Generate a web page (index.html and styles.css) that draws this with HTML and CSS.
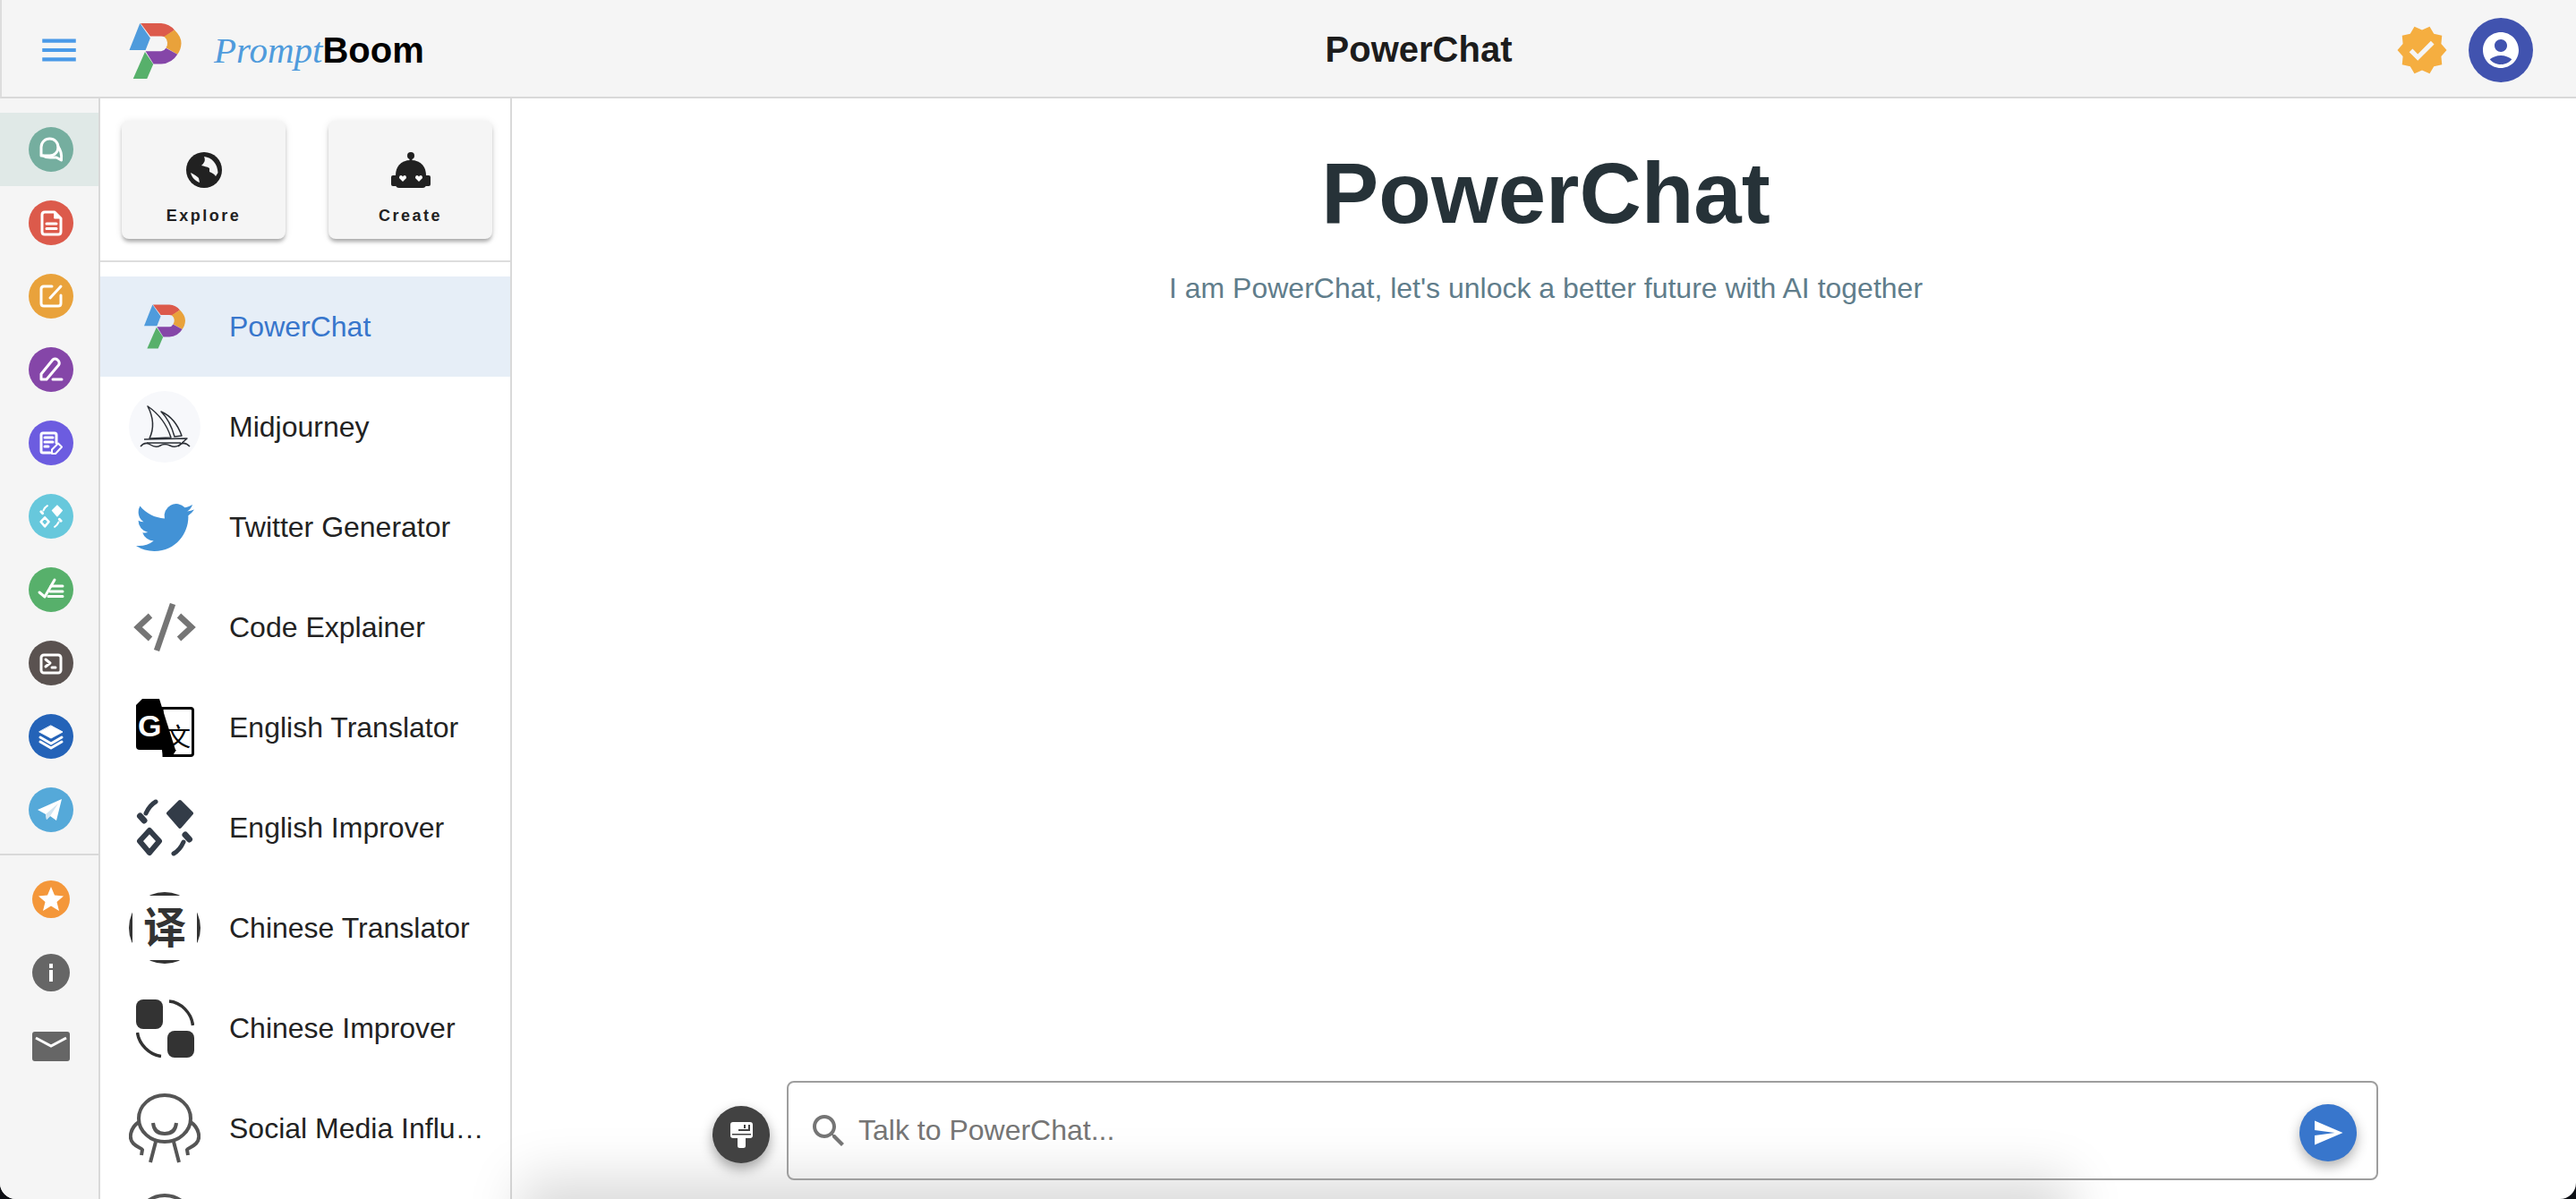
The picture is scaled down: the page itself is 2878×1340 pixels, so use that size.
FILE: index.html
```html
<!DOCTYPE html>
<html lang="en">

<head>
    <meta charset="UTF-8">
    <title>PowerChat - PromptBoom</title>
    <link rel="stylesheet" href="styles.css">
</head>

<body>
    <!-- shared icons -->
    <svg class="defs">
        <symbol id="logo" viewBox="0 0 176 188">
            <path fill="#4f9bdc" d="M36 0 71 50 55 91H0z" />
            <path fill="#dc5a4b" d="M38 0H108Q136 2 153 23L120 46Q114 44 108 44H71z" />
            <path fill="#e9a23b" d="M153 23Q176 45 176 68Q175 90 163 105L124 83Q130 75 129 65Q127 53 118 45z" />
            <path fill="#8546a8" d="M55 95H108Q118 94 124 84L163 105Q145 135 108 138H82z" />
            <path fill="#57b06b" d="M53 97 81 139 60 188H13z" />
        </symbol>
        <symbol id="diamonds" viewBox="0 0 64 64">
            <path fill="currentColor" stroke="currentColor" stroke-width="4" stroke-linejoin="round" d="M49 3 62 16 49 31 36 16z" />
            <path fill="none" stroke="currentColor" stroke-width="6" stroke-linejoin="round" d="M15 35 26 47 15 60 4 47z" />
            <path fill="none" stroke="currentColor" stroke-width="5" stroke-linecap="round" d="M22 3Q15 7 11 16" />
            <path fill="none" stroke="currentColor" stroke-width="7" stroke-linecap="round" d="M4.500 19 9 24" />
            <path fill="none" stroke="currentColor" stroke-width="5" stroke-linecap="round" d="M42 61Q49 57 53 48" />
            <path fill="none" stroke="currentColor" stroke-width="7" stroke-linecap="round" d="M59.500 45 55 40" />
        </symbol>
    </svg>

    <div class="app">
        <header class="topbar">
            <div class="topbar-left">
                <svg class="menu-icon" viewBox="0 0 24 24">
                    <path d="M3 18h18v-2H3v2zm0-5h18v-2H3v2zm0-7v2h18V6H3z" />
                </svg>
                <svg class="brand-logo"><use href="#logo" /></svg>
                <div class="brand-name"><span class="brand-prompt">Prompt</span><span class="brand-boom">Boom</span></div>
            </div>
            <div class="topbar-title">PowerChat</div>
            <div class="topbar-right">
                <svg class="verified-icon" viewBox="0 0 24 24">
                    <path d="M23 12l-2.44-2.79.34-3.69-3.61-.82-1.89-3.2L12 2.96 8.6 1.5 6.71 4.69 3.1 5.5l.34 3.7L1 12l2.44 2.79-.34 3.7 3.61.82L8.6 22.5l3.4-1.47 3.4 1.46 1.89-3.19 3.61-.82-.34-3.69L23 12zm-12.91 4.72-3.8-3.81 1.48-1.48 2.32 2.33 5.85-5.87 1.48 1.48-7.33 7.35z" />
                </svg>
                <div class="avatar">
                    <svg viewBox="0 0 24 24">
                        <path d="M12 2C6.48 2 2 6.48 2 12s4.48 10 10 10 10-4.48 10-10S17.52 2 12 2zm0 4c1.93 0 3.5 1.57 3.5 3.5S13.93 13 12 13s-3.5-1.57-3.5-3.5S10.07 6 12 6zm0 14c-2.03 0-4.43-.82-6.14-2.88C7.55 15.8 9.68 15 12 15s4.45.8 6.14 2.12C16.43 19.18 14.03 20 12 20z" />
                    </svg>
                </div>
            </div>
        </header>

        <div class="workspace">
            <nav class="rail">
                <div class="rail-row active">
                    <span class="rail-dot dot-teal">
                        <svg class="glyph" viewBox="0 0 50 50">
                            <path d="M14 32V22.500a9.500 9.500 0 1 1 9.500 9.500z" />
                            <path d="M33 22q4.500 6 3.500 15L31 34H24Q19 34 16 32" />
                        </svg>
                    </span>
                </div>
                <div class="rail-row">
                    <span class="rail-dot dot-red">
                        <svg class="glyph" viewBox="0 0 50 50">
                            <path d="M18 13H29L36 20V35Q36 38 33 38H18Q15 38 15 35V16Q15 13 18 13z" />
                            <path d="M20 26H31M20 31.500H31" />
                            <path class="solid" d="M29 13 36 20H29z" />
                        </svg>
                    </span>
                </div>
                <div class="rail-row">
                    <span class="rail-dot dot-orange">
                        <svg class="glyph" viewBox="0 0 50 50">
                            <path d="M26 14H17Q14 14 14 17V33Q14 36 17 36H33Q36 36 36 33V24" />
                            <path d="M24 27 36 14" />
                        </svg>
                    </span>
                </div>
                <div class="rail-row">
                    <span class="rail-dot dot-purple">
                        <svg class="glyph" viewBox="0 0 50 50">
                            <path d="M14 36V30L27 14Q29.500 12 32 14L33.500 15.500Q35 18 33.500 20L20 36z" />
                            <path d="M27 36H37" />
                        </svg>
                    </span>
                </div>
                <div class="rail-row">
                    <span class="rail-dot dot-violet">
                        <svg class="glyph" viewBox="0 0 50 50">
                            <path d="M31 25V16Q31 14 29 14H16Q14 14 14 16V34Q14 36 16 36H24" />
                            <path d="M18 19H27M18 24H27M18 29H22" />
                            <path class="thin" d="M26 37V32.500L33 25.500L37 29.500L30 37z" />
                        </svg>
                    </span>
                </div>
                <div class="rail-row">
                    <span class="rail-dot dot-sky">
                        <svg class="glyph-symbol"><use href="#diamonds" /></svg>
                    </span>
                </div>
                <div class="rail-row">
                    <span class="rail-dot dot-green">
                        <svg class="glyph" viewBox="0 0 50 50">
                            <path d="M12 28 18 33 29 14" />
                            <path d="M25 21H38M24 27H38M22 32.500H38" />
                        </svg>
                    </span>
                </div>
                <div class="rail-row">
                    <span class="rail-dot dot-brown">
                        <svg class="glyph" viewBox="0 0 50 50">
                            <rect x="14" y="16" width="22" height="20" rx="3" />
                            <path d="M19 21 24 25 19 29M26 30H30" />
                        </svg>
                    </span>
                </div>
                <div class="rail-row">
                    <span class="rail-dot dot-blue">
                        <svg class="glyph" viewBox="0 0 50 50">
                            <path class="solid" d="M25 13 38 20 25 27 12 20z" />
                            <path d="M13 26 25 33 37 26M13 31 25 38 37 31" />
                        </svg>
                    </span>
                </div>
                <div class="rail-row">
                    <span class="rail-dot dot-telegram">
                        <svg viewBox="0 0 50 50">
                            <path fill="#fff" d="M10 25 37 13 31 37 24 32 20 36 19 30z" />
                            <path fill="#d2e5f1" d="M19 30 33 18 24 32 20 36z" />
                        </svg>
                    </span>
                </div>
                <div class="rail-divider"></div>
                <div class="rail-row">
                    <span class="rail-small dot-star">
                        <svg viewBox="0 0 42 42">
                            <path fill="#fff" d="M21 7 25 16.500 35 17.500 27.500 24 30 34 21 28.500 12 34 14.500 24 7 17.500 17 16.500z" />
                        </svg>
                    </span>
                </div>
                <div class="rail-row">
                    <span class="rail-small dot-info">
                        <svg viewBox="0 0 42 42">
                            <path fill="#fff" d="M19 11H23V16H19zM19 18H23V31H19z" />
                        </svg>
                    </span>
                </div>
                <div class="rail-row">
                    <svg class="mail-icon" viewBox="0 0 42 33">
                        <rect width="42" height="33" rx="3" fill="#666" />
                        <path fill="none" stroke="#fff" stroke-width="3" d="M4 7 21 16 38 7" />
                    </svg>
                </div>
            </nav>

            <aside class="sidebar">
                <div class="quick-actions">
                    <button class="quick-btn">
                        <svg class="quick-icon" viewBox="0 0 40 40">
                            <circle cx="20" cy="20" r="20" fill="#212121" />
                            <path fill="#f5f5f5" d="M20 5C29 6 35 13 35.500 23L33 27C31 24 28 23 26 22L26 18C23 16 20 16 17 15C20 12 22 10 20 5z" />
                            <path fill="#f5f5f5" d="M5 23C9 25 12 27 14 29L15 34C10 32 6 28 5 23z" />
                        </svg>
                        Explore
                    </button>
                    <button class="quick-btn">
                        <svg class="quick-icon robot" viewBox="0 0 44 40">
                            <circle cx="22" cy="4" r="4" fill="#212121" />
                            <path fill="#212121" d="M20.500 4H23.500V10H20.500z" />
                            <path fill="#212121" d="M22 9C10 9 5 17 5 26V36Q5 40 9 40H35Q39 40 39 36V26C39 17 34 9 22 9z" />
                            <rect y="26" width="7" height="12" rx="2" fill="#212121" />
                            <rect x="37" y="26" width="7" height="12" rx="2" fill="#212121" />
                            <path fill="#fff" d="M13 33 9 29Q9 26 11 26 12.500 26 13 27.500 13.500 26 15 26 17 26 17 29z" />
                            <path fill="#fff" d="M31 33 27 29Q27 26 29 26 30.500 26 31 27.500 31.500 26 33 26 35 26 35 29z" />
                        </svg>
                        Create
                    </button>
                </div>

                <ul class="bot-list">
                    <li class="bot-row selected">
                        <span class="bot-icon"><svg class="bot-logo"><use href="#logo" /></svg></span>
                        <span class="bot-name">PowerChat</span>
                    </li>
                    <li class="bot-row">
                        <span class="bot-icon">
                            <svg viewBox="0 0 80 80" class="boat">
                                <circle cx="40" cy="40" r="40" fill="#f7f8fb" />
                                <g fill="none" stroke="#2b2f36" stroke-width="1.500" stroke-linejoin="round">
                                    <path d="M21 17Q40 30 47 52L23 53Q31 36 21 17z" />
                                    <path d="M36 23Q52 30 59 50L51 51Q46 33 36 23z" />
                                    <path d="M17 54 65 53 55 62M20 58H58" />
                                    <path d="M13 62Q18 56 24 60T35 61 46 61 57 60 68 62" />
                                </g>
                            </svg>
                        </span>
                        <span class="bot-name">Midjourney</span>
                    </li>
                    <li class="bot-row">
                        <span class="bot-icon">
                            <svg viewBox="0 0 24 24" class="twitter">
                                <path d="M23.953 4.570a10 10 0 01-2.825.775 4.958 4.958 0 002.163-2.723c-.951.555-2.005.959-3.127 1.184a4.920 4.920 0 00-8.384 4.482C7.690 8.095 4.067 6.130 1.640 3.162a4.822 4.822 0 00-.666 2.475c0 1.710.870 3.213 2.188 4.096a4.904 4.904 0 01-2.228-.616v.060a4.923 4.923 0 003.946 4.827 4.996 4.996 0 01-2.212.085 4.936 4.936 0 004.604 3.417 9.867 9.867 0 01-6.102 2.105c-.390 0-.779-.023-1.170-.067a13.995 13.995 0 007.557 2.209c9.053 0 13.998-7.496 13.998-13.985 0-.210 0-.420-.015-.630A9.935 9.935 0 0024 4.590z" />
                            </svg>
                        </span>
                        <span class="bot-name">Twitter Generator</span>
                    </li>
                    <li class="bot-row">
                        <span class="bot-icon">
                            <svg viewBox="0 0 70 54" class="code">
                                <path d="M19 14 5 27 19 40M51 14 65 27 51 40" />
                                <path d="M44 1 26 53" />
                            </svg>
                        </span>
                        <span class="bot-name">Code Explainer</span>
                    </li>
                    <li class="bot-row">
                        <span class="bot-icon">
                            <svg viewBox="0 0 66 66" class="gtranslate">
                                <path fill="#fff" stroke="#000" stroke-width="3" d="M30 11.500H62Q64.500 11.500 64.500 14V62Q64.500 64.500 62 64.500H32z" />
                                <path fill="#000" d="M1 8 8 1H27L45 58H5Q1 58 1 54z" />
                                <path fill="#000" d="M30 58H46L41 66H32z" />
                                <text class="gt-g" x="3" y="43">G</text>
                                <text class="gt-wen" x="34" y="54">文</text>
                            </svg>
                        </span>
                        <span class="bot-name">English Translator</span>
                    </li>
                    <li class="bot-row">
                        <span class="bot-icon"><svg class="improver"><use href="#diamonds" /></svg></span>
                        <span class="bot-name">English Improver</span>
                    </li>
                    <li class="bot-row">
                        <span class="bot-icon">
                            <svg viewBox="0 0 80 80" class="yi">
                                <circle cx="40" cy="40" r="40" fill="#333" />
                                <rect x="4" y="4" width="72" height="72" fill="#fff" />
                                <text x="40" y="57">译</text>
                            </svg>
                        </span>
                        <span class="bot-name">Chinese Translator</span>
                    </li>
                    <li class="bot-row">
                        <span class="bot-icon">
                            <svg viewBox="0 0 65 65" class="squares">
                                <rect width="30" height="33" rx="8" fill="#333" />
                                <rect x="35" y="35" width="30" height="30" rx="8" fill="#333" />
                                <path d="M37 2C50 3 62 15 63.500 29M1.500 37C3 50 15 62 28 63.500" />
                            </svg>
                        </span>
                        <span class="bot-name">Chinese Improver</span>
                    </li>
                    <li class="bot-row">
                        <span class="bot-icon">
                            <svg viewBox="0 0 80 78" class="influencer">
                                <ellipse cx="40" cy="28" rx="29" ry="26" />
                                <path d="M27 33Q28 45 40 45T53 33" />
                                <path d="M11 32C2 38-1 50 5 56 9 60 14 61 15 63L14 69M69 32C78 38 81 50 75 56 71 60 66 61 65 63L66 69" />
                                <path d="M30 54 24 77M50 54 56 77" />
                            </svg>
                        </span>
                        <span class="bot-name">Social Media Influencer</span>
                    </li>
                    <li class="bot-row">
                        <span class="bot-icon">
                            <svg viewBox="0 0 80 78" class="influencer">
                                <ellipse cx="40" cy="28" rx="29" ry="26" />
                            </svg>
                        </span>
                    </li>
                </ul>
            </aside>

            <main class="chat">
                <div class="chat-shade"></div>
                <div class="chat-intro">
                    <h1>PowerChat</h1>
                    <p>I am PowerChat, let's unlock a better future with AI together</p>
                </div>
                <div class="composer">
                    <button class="round-btn clear-btn">
                        <svg viewBox="0 0 25 29">
                            <path fill="#fff" d="M3 0H22Q25 0 25 3V15Q25 18 22 18H17V26.500Q17 29 14.500 29H10.500Q8 29 8 26.500V18H3Q0 18 0 15V3Q0 0 3 0z" />
                            <path fill="#424242" d="M15 3H17V7H15zM20 3H22V10H9V8H20zM2 13H23V14.500H2z" />
                        </svg>
                    </button>
                    <div class="composer-box">
                        <svg class="search-icon" viewBox="0 0 24 24">
                            <path d="M15.500 14h-.79l-.28-.27C15.410 12.590 16 11.110 16 9.500 16 5.910 13.090 3 9.500 3S3 5.910 3 9.500 5.910 16 9.500 16c1.610 0 3.090-.59 4.230-1.570l.27.28v.79l5 4.990L20.490 19l-4.990-5zm-6 0C7.010 14 5 11.990 5 9.500S7.010 5 9.500 5 14 7.010 14 9.500 11.990 14 9.500 14z" />
                        </svg>
                        <input type="text" class="composer-input" placeholder="Talk to PowerChat...">
                        <button class="round-btn send-btn">
                            <svg viewBox="0 0 24 24">
                                <path d="M2.010 21 23 12 2.010 3 2 10l15 2-15 2z" />
                            </svg>
                        </button>
                    </div>
                </div>
            </main>
        </div>
    </div>
</body>

</html>
```

FILE: styles.css
```css
* {
    box-sizing: border-box;
}

html,
body {
    height: 100%;
}

body {
    margin: 0;
    background-color: #0d0f14;
    font-family: "Liberation Sans", Arial, sans-serif;
    color: #222222;
}

.defs {
    display: none;
}

.app {
    height: 100vh;
    display: flex;
    flex-direction: column;
    background: #ffffff;
    border-radius: 0 0 18px 18px;
    overflow: hidden;
}

/* top bar */
.topbar {
    height: 110px;
    flex-shrink: 0;
    display: flex;
    align-items: center;
    padding-top: 3px;
    background-color: #f5f5f5;
    border-left: 2px solid #dddddd;
    border-bottom: 2px solid #d9d9d9;
}

.topbar-left {
    width: 570px;
    display: flex;
    align-items: center;
    padding-left: 39px;
}

.menu-icon {
    width: 50px;
    height: 50px;
    fill: #4a9ae8;
}

.brand-logo {
    width: 59px;
    height: 62px;
    margin-left: 53px;
    margin-top: 2px;
}

.brand-name {
    margin-left: 36px;
    white-space: nowrap;
}

.brand-prompt {
    font-family: "Liberation Serif", serif;
    font-style: italic;
    font-size: 41px;
    color: #4f9bdc;
}

.brand-boom {
    font-weight: 700;
    font-size: 40px;
    color: #000000;
}

.topbar-title {
    flex: 1;
    text-align: center;
    font-size: 40px;
    font-weight: 700;
    color: #1c1c1c;
}

.topbar-right {
    width: 280px;
    display: flex;
    align-items: center;
    justify-content: flex-end;
    gap: 22px;
    padding-right: 48px;
}

.verified-icon {
    width: 60px;
    height: 60px;
    fill: #f5ae40;
}

.avatar {
    width: 72px;
    height: 72px;
    border-radius: 50%;
    background-color: #4153af;
    display: flex;
    align-items: center;
    justify-content: center;
}

.avatar svg {
    width: 48px;
    height: 48px;
    fill: #ffffff;
}

.workspace {
    flex: 1;
    min-height: 0;
    display: flex;
}

/* icon rail */
.rail {
    width: 112px;
    flex-shrink: 0;
    padding-top: 16px;
    background-color: #f5f5f5;
    border-right: 2px solid #d9d9d9;
}

.rail-row {
    height: 82px;
    display: flex;
    align-items: center;
    justify-content: center;
    padding-left: 4px;
}

.rail-row.active {
    background-color: #e0e9e7;
}

.rail-divider {
    height: 2px;
    margin: 8px -2px 8px 0;
    background-color: #d9d9d9;
}

.rail-dot {
    width: 50px;
    height: 50px;
    border-radius: 50%;
    display: flex;
    align-items: center;
    justify-content: center;
}

.rail-small {
    width: 42px;
    height: 42px;
    border-radius: 50%;
}

.rail-dot svg,
.rail-small svg {
    display: block;
}

.glyph {
    width: 50px;
    height: 50px;
    fill: none;
    stroke: #ffffff;
    stroke-width: 3;
    stroke-linecap: round;
    stroke-linejoin: round;
}

.glyph .solid {
    fill: #ffffff;
    stroke-width: 1;
}

.glyph .thin {
    stroke-width: 2;
}

.glyph-symbol {
    width: 26px;
    height: 26px;
    color: #ffffff;
}

.mail-icon {
    width: 42px;
    height: 33px;
}

.dot-teal { background-color: #75ae9f; }
.dot-red { background-color: #dc5a4b; }
.dot-orange { background-color: #e9a23b; }
.dot-purple { background-color: #8546a8; }
.dot-violet { background-color: #6c5ce0; }
.dot-sky { background-color: #67c8dc; }
.dot-green { background-color: #57b06b; }
.dot-brown { background-color: #5a5250; }
.dot-blue { background-color: #2463b8; }
.dot-telegram { background-color: #55a9d9; }
.dot-star { background-color: #f4973a; }
.dot-info { background-color: #666666; }

/* bot sidebar */
.sidebar {
    width: 460px;
    flex-shrink: 0;
    background: #ffffff;
    border-right: 2px solid #d9d9d9;
    overflow: hidden;
}

.quick-actions {
    display: flex;
    gap: 48px;
    padding: 25px 0 24px 24px;
    border-bottom: 2px solid #dddddd;
}

.quick-btn {
    width: 183px;
    height: 132px;
    display: flex;
    flex-direction: column;
    align-items: center;
    padding: 35px 0 0;
    background-color: #f5f5f5;
    border: none;
    border-radius: 8px;
    box-shadow: 0 4px 4px -1px rgba(0, 0, 0, 0.3), 0 1px 8px rgba(0, 0, 0, 0.1);
    font-family: inherit;
    font-size: 18px;
    font-weight: 700;
    letter-spacing: 2.5px;
    color: #212121;
}

.quick-icon {
    width: 40px;
    height: 40px;
    margin: 0 0 21px;
    flex-shrink: 0;
}

.quick-icon.robot {
    width: 44px;
}

.bot-list {
    list-style: none;
    margin: 0;
    padding: 16px 0 0;
}

.bot-row {
    height: 112px;
    display: flex;
    align-items: center;
    gap: 32px;
    padding: 0 24px 0 32px;
    font-size: 32px;
}

.bot-row.selected {
    background-color: #e6eef7;
    color: #3876cc;
}

.bot-icon {
    width: 80px;
    height: 80px;
    flex-shrink: 0;
    display: flex;
    align-items: center;
    justify-content: center;
}

.bot-name {
    flex: 1;
    min-width: 0;
    white-space: nowrap;
    overflow: hidden;
    text-overflow: ellipsis;
}

.bot-logo {
    width: 46px;
    height: 50px;
}

.boat {
    width: 80px;
    height: 80px;
}

.twitter {
    width: 65px;
    height: 65px;
    fill: #4292d6;
}

.code {
    width: 70px;
    height: 54px;
    fill: none;
    stroke: #757575;
    stroke-width: 6.5;
}

.gtranslate {
    width: 66px;
    height: 66px;
}

.gt-g {
    font-size: 34px;
    font-weight: 700;
    fill: #ffffff;
}

.gt-wen {
    font-family: "Noto Sans CJK SC", sans-serif;
    font-size: 28px;
    fill: #000000;
}

.improver {
    width: 64px;
    height: 64px;
    color: #333c48;
}

.yi {
    width: 80px;
    height: 80px;
}

.yi text {
    font-family: "Noto Sans CJK SC", sans-serif;
    font-size: 48px;
    font-weight: 700;
    text-anchor: middle;
    fill: #333333;
}

.squares {
    width: 65px;
    height: 65px;
    fill: none;
    stroke: #333333;
    stroke-width: 3.5;
}

.squares rect {
    stroke: none;
}

.influencer {
    width: 80px;
    height: 78px;
    fill: none;
    stroke: #555555;
    stroke-width: 4;
}

/* chat area */
.chat {
    position: relative;
    flex: 1;
    min-width: 0;
    display: flex;
    flex-direction: column;
}

.chat-shade {
    position: absolute;
    left: 35px;
    right: 590px;
    bottom: -62px;
    height: 60px;
    box-shadow: 0 0 60px 25px rgba(0, 0, 0, 0.15);
}

.chat-intro {
    position: relative;
    padding: 48px 0 0 4px;
    text-align: center;
}

.chat-intro h1 {
    margin: 0 0 25px;
    font-size: 96px;
    line-height: 115px;
    font-weight: 700;
    color: #263238;
}

.chat-intro p {
    margin: 0;
    font-size: 32px;
    line-height: 48px;
    color: #607d8b;
}

.composer {
    position: relative;
    margin-top: auto;
    display: flex;
    align-items: center;
    gap: 19px;
    padding: 0 221px 21px 224px;
}

.composer-box {
    flex: 1;
    height: 111px;
    display: flex;
    align-items: center;
    padding: 0 22px 0 21px;
    border: 2px solid #9e9e9e;
    border-radius: 8px;
}

.search-icon {
    width: 48px;
    height: 48px;
    flex-shrink: 0;
    fill: #757575;
}

.composer-input {
    flex: 1;
    min-width: 0;
    margin-left: 9px;
    padding: 0;
    border: none;
    outline: none;
    background: transparent;
    font-family: inherit;
    font-size: 32px;
    color: #212121;
}

.composer-input::placeholder {
    color: #757575;
    opacity: 1;
}

.round-btn {
    width: 64px;
    height: 64px;
    flex-shrink: 0;
    display: flex;
    align-items: center;
    justify-content: center;
    padding: 0;
    border: none;
    border-radius: 50%;
}

.clear-btn {
    margin-top: 9px;
    background-color: #424242;
    box-shadow: 0 6px 14px rgba(0, 0, 0, 0.35);
}

.clear-btn svg {
    width: 25px;
    height: 29px;
}

.send-btn {
    margin-top: 5px;
    background-color: #3876cc;
    box-shadow: 0 6px 14px rgba(0, 0, 0, 0.3);
}

.send-btn svg {
    width: 36px;
    height: 36px;
    fill: #ffffff;
}
```
